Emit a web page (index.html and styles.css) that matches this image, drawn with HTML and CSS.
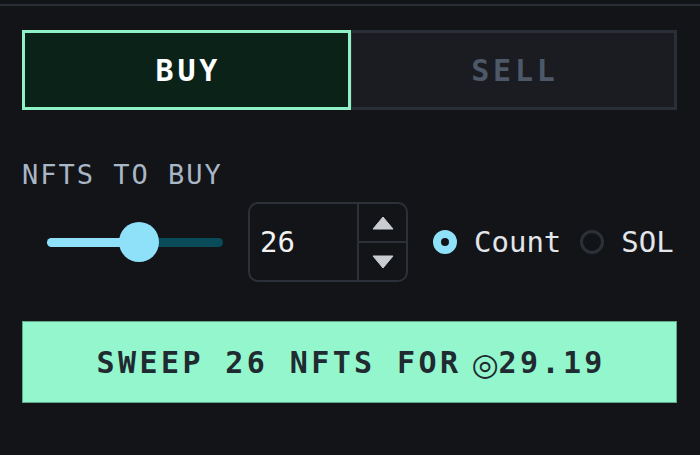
FILE: index.html
```html
<!DOCTYPE html>
<html>
<head>
<meta charset="utf-8">
<link rel="stylesheet" href="styles.css">
</head>
<body>
<div class="topline"></div>
<div class="panel">
  <div class="tabs">
    <div class="tab tab-buy">BUY</div>
    <div class="tab tab-sell">SELL</div>
  </div>
  <div class="label">NFTS TO BUY</div>
  <div class="controls">
    <div class="slider">
      <div class="track">
        <div class="fill" style="width: 92px"></div>
        <div class="thumb" style="left: 72px"></div>
      </div>
    </div>
    <div class="number">
      <div class="value">26</div>
      <div class="spin">
        <div class="spin-btn"><svg width="22" height="14" viewBox="0 0 22 14"><path d="M11 1 L21 13 L1 13 Z" fill="#c9cdd1" stroke="#c9cdd1" stroke-width="1" stroke-linejoin="round"/></svg></div>
        <div class="spin-btn spin-down"><svg width="22" height="14" viewBox="0 0 22 14"><path d="M1 1 L21 1 L11 13 Z" fill="#c9cdd1" stroke="#c9cdd1" stroke-width="1" stroke-linejoin="round"/></svg></div>
      </div>
    </div>
    <div class="radios">
      <div class="radio-item"><span class="radio radio-on"></span><span class="radio-text">Count</span></div>
      <div class="radio-item"><span class="radio"></span><span class="radio-text">SOL</span></div>
    </div>
  </div>
  <div class="sweep">SWEEP 26 NFTS FOR <span class="sol-sign">◎</span>29.19</div>
</div>
</body>
</html>
```

FILE: styles.css
```css
html, body {
  margin: 0;
  padding: 0;
  background: #131418;
  font-family: "DejaVu Sans Mono", "Liberation Mono", monospace;
  overflow: hidden;
}
.topline {
  height: 2px;
  margin-top: 4px;
  background: #2a2e36;
}
.panel {
  padding: 0 23px 0 22px;
}
.tabs {
  margin-top: 24px;
  display: flex;
  height: 80px;
}
.tab {
  flex: 1;
  box-sizing: border-box;
  display: flex;
  align-items: center;
  justify-content: center;
  font-size: 30px;
  font-weight: bold;
  letter-spacing: 3.8px;
  padding-left: 3.8px;
}
.tab-buy {
  background: #0b2219;
  border: 3px solid #8ef2c6;
  color: #ffffff;
  flex-basis: 329px;
}
.tab-sell {
  background: #1a1c21;
  border: 3px solid #2a2f37;
  border-left-width: 1px;
  color: #4d5868;
  flex-basis: 326px;
}
.label {
  margin-top: 49px;
  font-size: 27px;
  line-height: 32px;
  letter-spacing: 2px;
  color: #a9b6c6;
}
.controls {
  margin-top: 11px;
  height: 80px;
  display: flex;
  align-items: center;
  padding-left: 25px;
  gap: 25px;
}
.slider {
  width: 176px;
  height: 40px;
  display: flex;
  align-items: center;
}
.track {
  position: relative;
  width: 176px;
  height: 9px;
  border-radius: 5px;
  background: #0a4b5a;
}
.fill {
  height: 9px;
  border-radius: 5px;
  background: #8fe1f9;
}
.thumb {
  position: absolute;
  top: -15.5px;
  width: 40px;
  height: 40px;
  border-radius: 50%;
  background: #8fe1f9;
}
.number {
  box-sizing: border-box;
  width: 160px;
  height: 80px;
  border: 2px solid #2c3038;
  border-radius: 10px;
  display: flex;
}
.value {
  flex: 1;
  display: flex;
  align-items: center;
  padding-left: 10px;
  font-size: 29px;
  color: #f2f2f2;
}
.spin {
  width: 47px;
  border-left: 2px solid #2c3038;
  display: flex;
  flex-direction: column;
}
.spin-btn {
  flex: 1;
  display: flex;
  align-items: center;
  justify-content: center;
}
.spin-down {
  border-top: 2px solid #2c3038;
}
.radios {
  display: flex;
  align-items: center;
  gap: 19px;
}
.radio-item {
  display: flex;
  align-items: center;
  gap: 17px;
}
.radio {
  box-sizing: border-box;
  width: 24px;
  height: 24px;
  border-radius: 50%;
  border: 3px solid #2c3139;
}
.radio-on {
  border: 8px solid #8fe1f9;
  background: #131418;
}
.radio-text {
  font-size: 29px;
  color: #e2e6ea;
}
.sweep {
  margin-top: 39px;
  box-sizing: border-box;
  height: 82px;
  background: #93f6cc;
  border: 1px solid #5fa98a;
  display: flex;
  align-items: center;
  justify-content: center;
  font-size: 30px;
  font-weight: bold;
  letter-spacing: 3.4px;
  padding-left: 3.4px;
  color: #1f2a31;
}
.sol-sign {
  font-family: "DejaVu Sans", sans-serif;
  font-weight: normal;
  font-size: 31px;
  letter-spacing: 0;
  line-height: 1;
  margin-left: 10px;
  margin-right: 0;
  position: relative;
  top: 2px;
}
```
